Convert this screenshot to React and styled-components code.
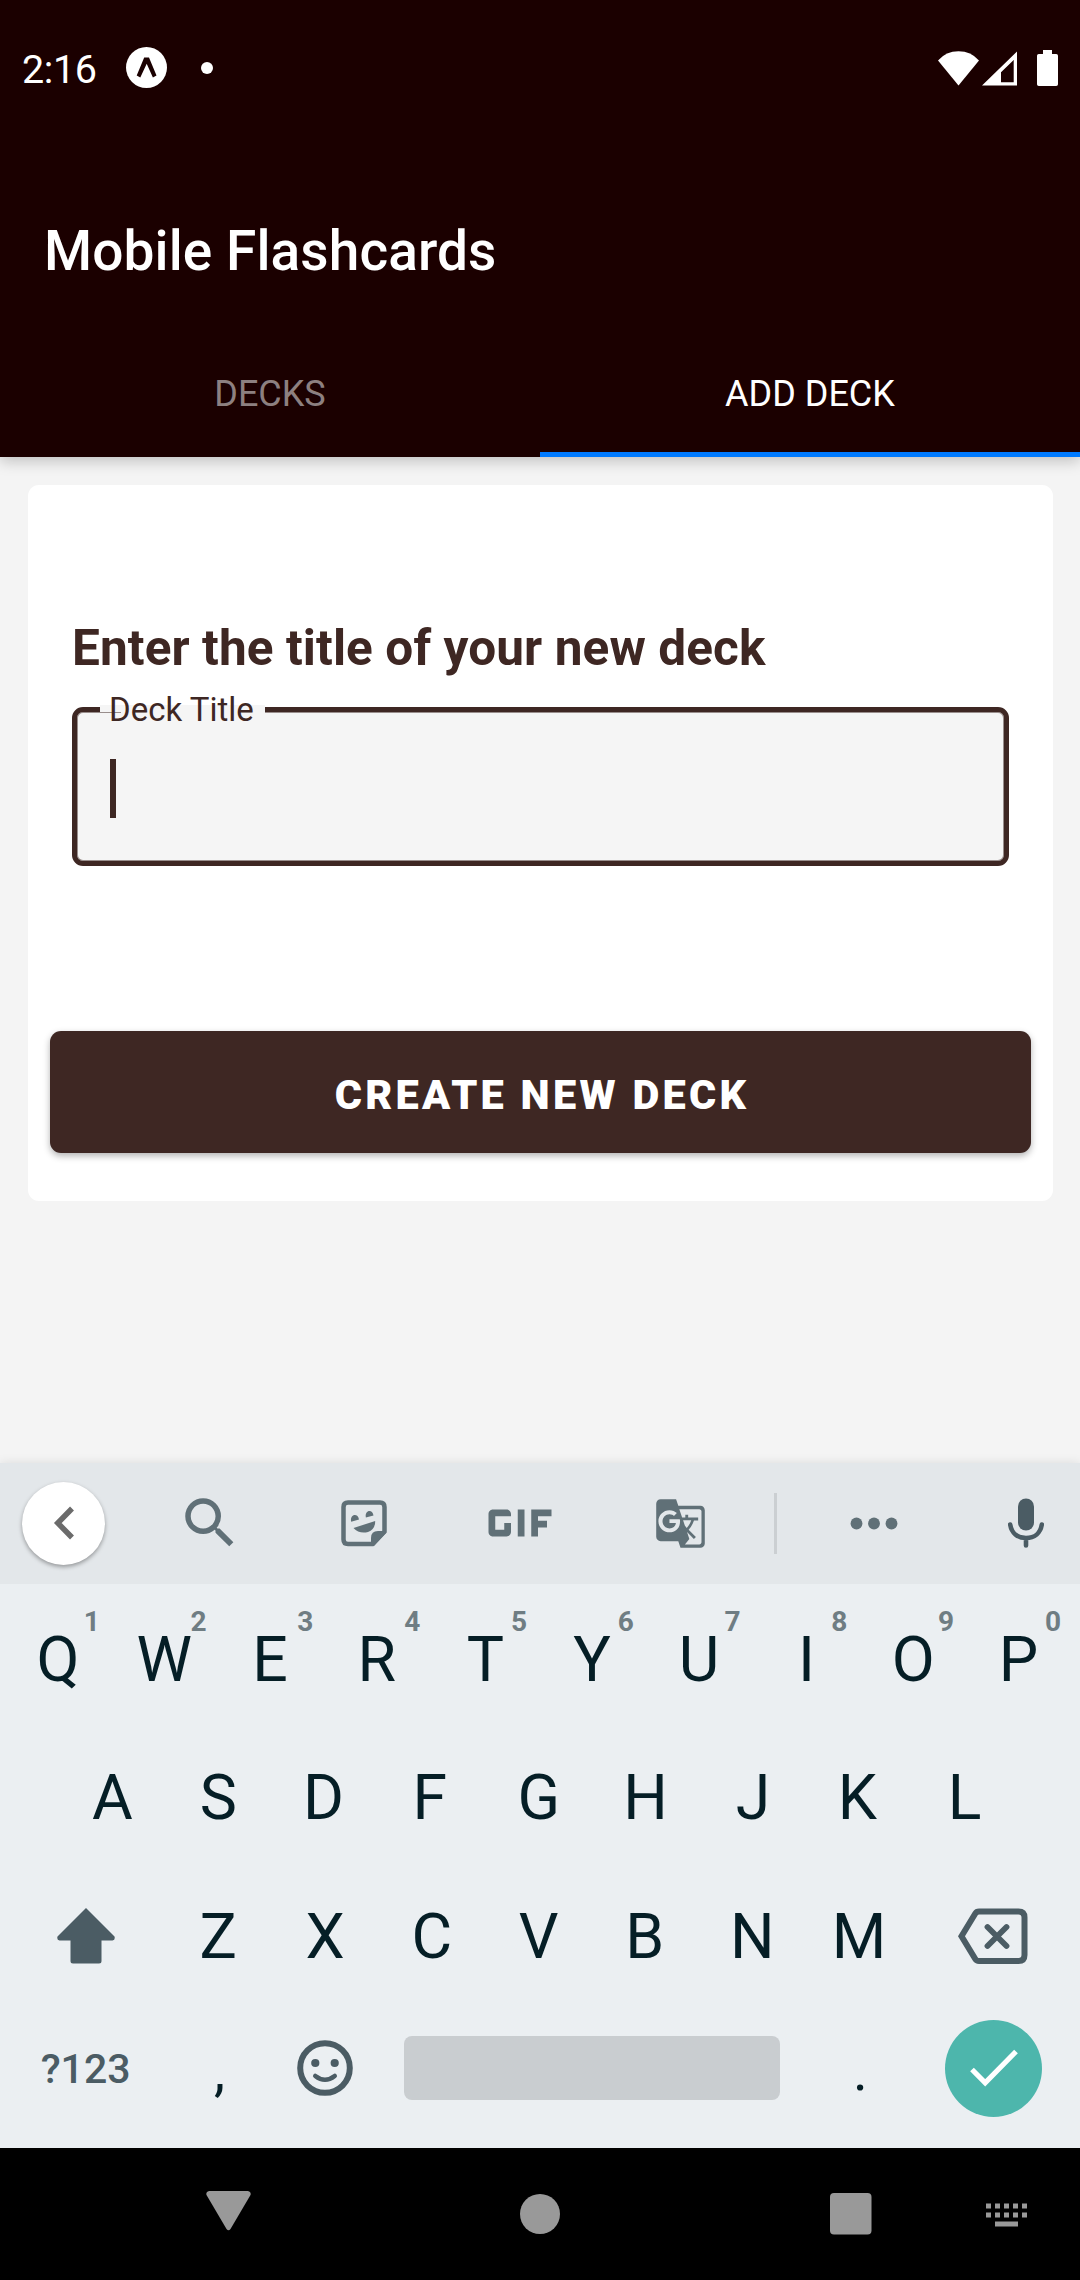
import React from "react";
import styled, { createGlobalStyle } from "styled-components";
import { MdGif, MdGTranslate, MdSearch } from "react-icons/md";

const brown = "#3e2723";
const maroon = "#1b0000";
const keyInk = "#051e26";
const iconInk = "#4b5c64";
const stripInk = "#607077";

const GlobalStyle = createGlobalStyle`
  * { box-sizing: border-box; }
  body {
    margin: 0;
    background: #f4f4f4;
    font-family: Roboto, "Liberation Sans", sans-serif;
  }
  svg { display: block; flex: none; }
`;

const Screen = styled.div`
  width: 1080px;
  height: 2280px;
  display: flex;
  flex-direction: column;
  background: #f4f4f4;
  overflow: hidden;
`;

const Header = styled.header`
  flex: none;
  height: 457px;
  display: flex;
  flex-direction: column;
  background: ${maroon};
  color: #fff;
  box-shadow: 0 4px 14px rgba(0, 0, 0, 0.22);
`;

const StatusBar = styled.div`
  height: 135px;
  padding: 0 22px;
  display: flex;
  align-items: center;
  justify-content: space-between;
`;

const StatusGroup = styled.div`
  display: flex;
  align-items: center;
`;

const Clock = styled.span`
  width: 104px;
  padding-top: 4px;
  font-size: 39.5px;
  letter-spacing: -0.4px;
  line-height: 47px;
`;

const NotificationDot = styled.span`
  width: 12px;
  height: 12px;
  margin-left: 34px;
  border-radius: 50%;
  background: #fff;
`;

const AppTitle = styled.h1`
  margin: 41px 0 0;
  padding-left: 44px;
  height: 150px;
  font-size: 55px;
  font-weight: 500;
  letter-spacing: 0.1px;
  line-height: 150px;
`;

const Tabs = styled.nav`
  flex: 1;
  display: grid;
  grid-template-columns: 1fr 1fr;
`;

const Tab = styled.div`
  display: flex;
  align-items: center;
  justify-content: center;
  padding-top: ${(p) => (p.$active ? 9 : 4)}px;
  border-bottom: ${(p) => (p.$active ? "5px solid #007aff" : "none")};
  color: ${(p) => (p.$active ? "#fff" : "#8d8080")};
  font-size: 36px;
`;

const Main = styled.main`
  flex: 1;
  padding: 28px 27px 0 28px;
`;

const Card = styled.section`
  height: 716px;
  padding: 133px 22px 48px;
  border-radius: 11px;
  background: #fff;
`;

const Form = styled.div`
  padding: 0 22px;
`;

const Prompt = styled.h2`
  margin: 0;
  color: ${brown};
  font-size: 49.5px;
  font-weight: 700;
  letter-spacing: 0.1px;
  line-height: 60px;
  white-space: nowrap;
`;

const Field = styled.div`
  position: relative;
  height: 159px;
  margin-top: 29px;
  padding: 47px 33px;
  border: 5px solid ${brown};
  border-radius: 11px;
  background: #f5f5f5;
  box-shadow: inset 0 0 0 1px rgba(62, 39, 35, 0.5);
`;

const FieldLabel = styled.label`
  position: absolute;
  top: -7px;
  left: 23px;
  width: 165px;
  height: 14px;
  padding-left: 9px;
  background: #f5f5f5;
  color: ${brown};
  font-size: 33px;
  line-height: 10px;
  white-space: nowrap;

  &::before {
    content: "";
    position: absolute;
    left: 0;
    top: 7px;
    width: 21px;
    height: 1px;
    background: rgba(62, 39, 35, 0.5);
  }
`;

const Caret = styled.div`
  width: 6px;
  height: 59px;
  background: ${brown};
`;

const CreateButton = styled.button`
  display: block;
  width: 981px;
  height: 122px;
  margin: 165px 0 0;
  padding: 5px 0 0 3px;
  border: 0;
  border-radius: 11px;
  background: ${brown};
  box-shadow: 0 3px 7px rgba(0, 0, 0, 0.3);
  color: #fff;
  font-family: inherit;
  font-size: 41.5px;
  font-weight: 900;
  letter-spacing: 3.25px;
`;

const Keyboard = styled.section`
  flex: none;
  height: 685px;
  background: #ebeff2;
  box-shadow: 0 0 10px rgba(0, 0, 0, 0.1);
`;

const Strip = styled.div`
  height: 121px;
  padding-bottom: 1px;
  display: grid;
  grid-template-columns: 127px 163px 148px 164px 156px 35px 179px 108px;
  background: #e3e7ea;
  color: ${stripInk};
`;

const StripItem = styled.div`
  display: flex;
  align-items: center;
  justify-content: center;
  padding-left: ${(p) => p.$start || 0}px;
  padding-right: ${(p) => p.$end || 0}px;
`;

const BackCircle = styled.div`
  width: 83px;
  height: 83px;
  display: flex;
  align-items: center;
  justify-content: center;
  border-radius: 50%;
  background: #fff;
  box-shadow: 0 2px 4px rgba(0, 0, 0, 0.35);
`;

const Divider = styled.div`
  width: 3px;
  height: 61px;
  background: #cbcfd2;
`;

const Keys = styled.div`
  padding: 6px 6px 0;
`;

const KeyRow = styled.div`
  display: flex;
  justify-content: center;
  height: ${(p) => p.$height || 138.6}px;
`;

const Key = styled.div`
  position: relative;
  width: ${(p) => p.$width || 106.8}px;
  padding-top: ${(p) => p.$drop || 0}px;
  padding-right: ${(p) => (p.$pull || 0) * 2}px;
  display: flex;
  align-items: center;
  justify-content: center;
  color: ${keyInk};
  font-size: ${(p) => p.$size || 62.5}px;
`;

const Hint = styled.span`
  position: absolute;
  top: 15px;
  right: 13px;
  color: #6f7d83;
  font-size: 28px;
  font-weight: 700;
  line-height: 33px;
`;

const SymbolsLabel = styled.span`
  padding-top: 2px;
  color: ${iconInk};
  font-size: 41px;
  font-weight: 500;
`;

const SpaceBar = styled.div`
  width: 376px;
  height: 64px;
  border-radius: 8px;
  background: #c9cdd0;
`;

const EnterCircle = styled.div`
  width: 97px;
  height: 97px;
  display: flex;
  align-items: center;
  justify-content: center;
  border-radius: 50%;
  background: #4db6ac;
`;

const NavBar = styled.footer`
  flex: none;
  height: 132px;
  padding-left: 206px;
  display: grid;
  grid-template-columns: 314px 310px 153px 45px;
  align-items: center;
  background: #000;
`;

const TOP_ROW = ["Q", "W", "E", "R", "T", "Y", "U", "I", "O", "P"];
const HOME_ROW = ["A", "S", "D", "F", "G", "H", "J", "K", "L"];
const BOTTOM_ROW = ["Z", "X", "C", "V", "B", "N", "M"];

const PULL = { E: 3, R: 3, D: 3, F: 3.5, K: 3, L: 2.5, P: 2, B: 2, W: 2, J: 0.5, I: 0.5, O: 0.5, A: 0.5 };
const pullOf = (letter) => PULL[letter] ?? 1.3;

const ExpoIcon = () => (
  <svg width="41" height="41" viewBox="0 0 41 41">
    <circle cx="20.5" cy="20.5" r="20.5" fill="#fff" />
    <path
      d="M18.2 10.500h4.800l7.500 18-3.600 2L20.700 16.800 14.300 30.500 10.700 28.500Z"
      fill={maroon}
    />
  </svg>
);

const SystemIcons = () => (
  <svg width="121" height="38" viewBox="937 48 121 38" fill="#fff">
    <path d="M938 59.5Q946 50.3 958.5 50.3T979 59.5L958.5 84.5Z" />
    <path
      fillRule="evenodd"
      d="M1017 50.5V84.5H982ZM1013.7 59 1001 71.2V81.3H1013.7Z"
    />
    <path d="M1043 49h9v4h4.200q1.800 0 1.800 1.800v28.400q0 1.800-1.800 1.800h-17.400q-1.800 0-1.800-1.800V54.800q0-1.800 1.800-1.800h4.200z" />
  </svg>
);

const ChevronIcon = () => (
  <svg width="22" height="34" viewBox="0 0 22 34">
    <path d="M19 2.500 4.800 17 19 31.500" fill="none" stroke="#6b6b6b" strokeWidth="5.500" />
  </svg>
);

const StickerIcon = () => (
  <svg width="46" height="47" viewBox="0 0 46 47">
    <path
      d="M7 2.500H39Q43.500 2.500 43.500 7V31.500L31.500 44H7Q2.500 44 2.500 39.500V7Q2.500 2.500 7 2.500Z"
      fill="none"
      stroke={stripInk}
      strokeWidth="4.500"
    />
    <path d="M30 45V38Q30 31 37 31H45V33L33 46Z" fill={stripInk} />
    <path d="M10.200 21.800C8.500 14 17 12.500 18 19.600Z M24.900 17.600C23.300 10 31.500 8.500 32.500 15.500Z" fill={stripInk} />
    <path d="M12.500 28 34.200 21Q34.200 29.500 27 32 18 34 12.500 28Z" fill={stripInk} />
  </svg>
);

const MoreIcon = () => (
  <svg width="48" height="14" viewBox="0 0 48 14" fill={stripInk}>
    <circle cx="6.500" cy="7.500" r="5.900" />
    <circle cx="24" cy="7.500" r="5.900" />
    <circle cx="41.500" cy="7.500" r="5.900" />
  </svg>
);

const MicIcon = () => (
  <svg width="36" height="50" viewBox="0 0 36 50">
    <rect x="10" y="0.500" width="16" height="32" rx="8" fill={iconInk} />
    <path
      d="M2.200 26.500C3.500 35 9.500 40 18 40S32.500 35 33.800 26.500M18 40V47.500"
      fill="none"
      stroke={iconInk}
      strokeWidth="4.600"
      strokeLinecap="round"
    />
  </svg>
);

const ShiftIcon = () => (
  <svg width="58" height="56" viewBox="0 0 58 56">
    <path
      d="M29 0 57.500 28.500Q58.500 32 55.500 32.500H44.500V53Q44.500 55.500 42 55.500H16Q13.500 55.500 13.500 53V32.500H2.500Q-.5 32 .5 28.500Z"
      fill={iconInk}
    />
  </svg>
);

const BackspaceIcon = () => (
  <svg width="70" height="56" viewBox="0 0 70 56" fill="none" stroke={iconInk}>
    <path
      d="M21 3.500H60.500Q66.500 3.500 66.500 9.500V47Q66.500 53 60.500 53H21Q18.500 53 17.300 51L3.500 28.200 17.300 5.500Q18.500 3.500 21 3.500Z"
      strokeWidth="6"
    />
    <path d="M29.500 19 48.500 38M48.500 19 29.500 38" strokeWidth="5.800" strokeLinecap="round" />
  </svg>
);

const SmileIcon = () => (
  <svg width="56" height="56" viewBox="0 0 56 56">
    <circle cx="28" cy="28" r="24.800" fill="none" stroke={iconInk} strokeWidth="6" />
    <circle cx="18.300" cy="23" r="4.100" fill={iconInk} />
    <circle cx="37.700" cy="23" r="4.100" fill={iconInk} />
    <path
      d="M18.300 36Q28 43.500 37.700 36"
      fill="none"
      stroke={iconInk}
      strokeWidth="4.600"
      strokeLinecap="round"
    />
  </svg>
);

const CheckIcon = () => (
  <svg width="48" height="38" viewBox="0 0 48 38">
    <path d="M2 20.500 15.200 33.800 46 2.500" fill="none" stroke="#fff" strokeWidth="5.200" />
  </svg>
);

const HideKeyboardIcon = () => (
  <svg width="45" height="41" viewBox="0 0 45 41" fill="#999">
    {[3, 12, 21, 30, 39].map((x) => (
      <React.Fragment key={x}>
        <rect x={x} y="9.500" width="5" height="5" />
        <rect x={x} y="18.500" width="5" height="5" />
      </React.Fragment>
    ))}
    <rect x="12" y="27.500" width="23" height="5" />
  </svg>
);

export default function App() {
  return (
    <>
      <GlobalStyle />
      <Screen>
        <Header>
          <StatusBar>
            <StatusGroup>
              <Clock>2:16</Clock>
              <ExpoIcon />
              <NotificationDot />
            </StatusGroup>
            <SystemIcons />
          </StatusBar>
          <AppTitle>Mobile Flashcards</AppTitle>
          <Tabs>
            <Tab>DECKS</Tab>
            <Tab $active>ADD DECK</Tab>
          </Tabs>
        </Header>

        <Main>
          <Card>
            <Form>
              <Prompt>Enter the title of your new deck</Prompt>
              <Field>
                <FieldLabel>Deck Title</FieldLabel>
                <Caret />
              </Field>
            </Form>
            <CreateButton>CREATE NEW DECK</CreateButton>
          </Card>
        </Main>

        <Keyboard>
          <Strip>
            <StripItem>
              <BackCircle>
                <ChevronIcon />
              </BackCircle>
            </StripItem>
            <StripItem $start={3}>
              <MdSearch size={66} />
            </StripItem>
            <StripItem>
              <StickerIcon />
            </StripItem>
            <StripItem>
              <MdGif size={108} />
            </StripItem>
            <StripItem>
              <MdGTranslate size={53} />
            </StripItem>
            <StripItem>
              <Divider />
            </StripItem>
            <StripItem $end={18}>
              <MoreIcon />
            </StripItem>
            <StripItem>
              <MicIcon />
            </StripItem>
          </Strip>

          <Keys>
            <KeyRow>
              {TOP_ROW.map((letter, i) => (
                <Key key={letter} $pull={pullOf(letter)}>
                  {letter}
                  <Hint>{(i + 1) % 10}</Hint>
                </Key>
              ))}
            </KeyRow>
            <KeyRow>
              {HOME_ROW.map((letter) => (
                <Key key={letter} $pull={pullOf(letter)}>
                  {letter}
                </Key>
              ))}
            </KeyRow>
            <KeyRow>
              <Key $width={160.2} $pull={0.5}>
                <ShiftIcon />
              </Key>
              {BOTTOM_ROW.map((letter) => (
                <Key key={letter} $pull={pullOf(letter)}>
                  {letter}
                </Key>
              ))}
              <Key $width={160.2} $pull={1}>
                <BackspaceIcon />
              </Key>
            </KeyRow>
            <KeyRow $height={125}>
              <Key $width={160.2} $pull={0.5}>
                <SymbolsLabel>?123</SymbolsLabel>
              </Key>
              <Key $size={56} $drop={5}>
                ,
              </Key>
              <Key $pull={1}>
                <SmileIcon />
              </Key>
              <Key $width={427.2} $pull={1}>
                <SpaceBar />
              </Key>
              <Key $size={56} $drop={5}>
                .
              </Key>
              <Key $width={160.2}>
                <EnterCircle>
                  <CheckIcon />
                </EnterCircle>
              </Key>
            </KeyRow>
          </Keys>
        </Keyboard>

        <NavBar>
          <svg width="45" height="46" viewBox="0 0 45 46">
            <path d="M3 0H42Q45.500 1 44.500 4L24.500 38Q22.500 40.500 20.500 38L.5 4Q-.5 1 3 0Z" fill="#999" />
          </svg>
          <svg width="40" height="40" viewBox="0 0 40 40">
            <circle cx="20" cy="20" r="20" fill="#999" />
          </svg>
          <svg width="42" height="42" viewBox="0 0 42 42">
            <rect width="41.500" height="41.500" rx="4" fill="#999" />
          </svg>
          <HideKeyboardIcon />
        </NavBar>
      </Screen>
    </>
  );
}
